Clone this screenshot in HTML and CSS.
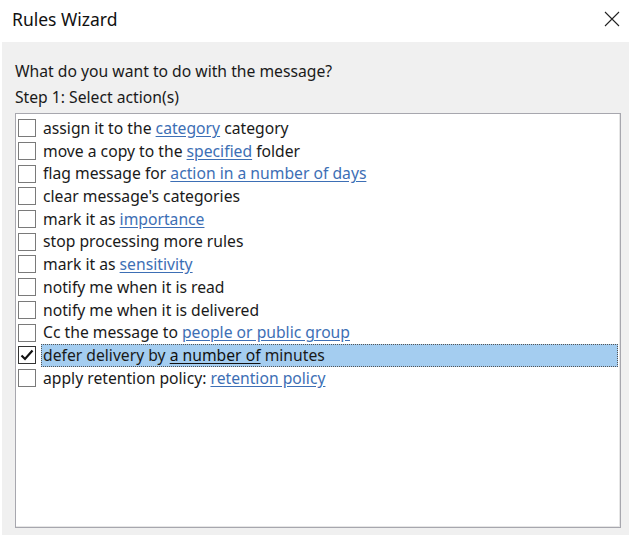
FILE: index.html
```html
<!DOCTYPE html>
<html>
<head>
<meta charset="utf-8">
<link rel="stylesheet" href="styles.css">
</head>
<body>
<div class="dialog">
  <div class="titlebar">
    <span class="title">Rules Wizard</span>
    <svg class="close" width="16" height="16" viewBox="0 0 16 16"><path d="M1 1 L15 15 M15 1 L1 15" stroke="#222" stroke-width="1.1" fill="none"/></svg>
  </div>
  <div class="panel">
    <div class="prompt">What do you want to do with the message?</div>
    <div class="prompt step">Step 1: Select action(s)</div>
    <div class="listbox">
      <div class="item"><span class="box"></span><span class="label">assign it to the <a>category</a> category</span></div>
      <div class="item"><span class="box"></span><span class="label">move a copy to the <a>specified</a> folder</span></div>
      <div class="item"><span class="box"></span><span class="label">flag message for <a>action in a number of days</a></span></div>
      <div class="item"><span class="box"></span><span class="label">clear message's categories</span></div>
      <div class="item"><span class="box"></span><span class="label">mark it as <a>importance</a></span></div>
      <div class="item"><span class="box"></span><span class="label">stop processing more rules</span></div>
      <div class="item"><span class="box"></span><span class="label">mark it as <a>sensitivity</a></span></div>
      <div class="item"><span class="box"></span><span class="label">notify me when it is read</span></div>
      <div class="item"><span class="box"></span><span class="label">notify me when it is delivered</span></div>
      <div class="item"><span class="box"></span><span class="label">Cc the message to <a>people or public group</a></span></div>
      <div class="item selected"><span class="box checked"><svg width="14" height="14" viewBox="0 0 14 14"><path d="M1.5 7.5 L5 11 L12.5 2.5" stroke="#111" stroke-width="2.2" fill="none"/></svg></span><span class="label">defer delivery by <a>a number of</a> minutes</span></div>
      <div class="item"><span class="box"></span><span class="label">apply retention policy: <a>retention policy</a></span></div>
    </div>
  </div>
</div>
</body>
</html>
```

FILE: styles.css
```css
html, body {
  margin: 0;
  padding: 0;
  background: #ffffff;
}

.dialog {
  width: 631px;
  height: 535px;
  display: flex;
  flex-direction: column;
  font-family: "Noto Sans", "Open Sans", sans-serif;
  color: #1a1a1a;
}

.titlebar {
  height: 42px;
  display: flex;
  align-items: center;
  justify-content: space-between;
  padding: 0 10px 4px 12px;
  box-sizing: border-box;
}

.title {
  font-size: 17.5px;
  color: #111;
}

.close {
  margin-right: 1px;
}

.panel {
  flex: 1;
  margin: 0 2px 0 2px;
  background: #f0f0f0;
  padding: 18px 8px 7px 13px;
  display: flex;
  flex-direction: column;
}

.prompt {
  font-size: 15.7px;
  line-height: 22px;
  height: 22px;
}

.step {
  margin-top: 4px;
}

.listbox {
  margin-top: 5px;
  flex: 1;
  background: #fff;
  border: 1px solid #a7a7ae;
  box-shadow: inset -1px -1px 0 #e6e6e6;
  padding: 3px 2px 0 2px;
}

.item {
  height: 22.7px;
  display: flex;
  align-items: center;
  font-size: 15.7px;
  white-space: nowrap;
}

.box {
  width: 16px;
  height: 16px;
  border: 1px solid #7a7a7a;
  background: #fff;
  margin-right: 5px;
  flex: none;
  display: flex;
  align-items: center;
  justify-content: center;
}

.box.checked {
  border-color: #333;
}

.label {
  display: block;
  line-height: 22.7px;
  padding-left: 2px;
}

.item a {
  color: #3d6fb5;
  text-decoration: underline;
  text-underline-offset: 2px;
}

.item.selected .label {
  flex: 1;
  align-self: stretch;
  background: #a4cdf0;
  outline: 1px dotted #555;
  outline-offset: -1px;
}

.item.selected a {
  color: #111;
  text-decoration-color: #111;
}
```
